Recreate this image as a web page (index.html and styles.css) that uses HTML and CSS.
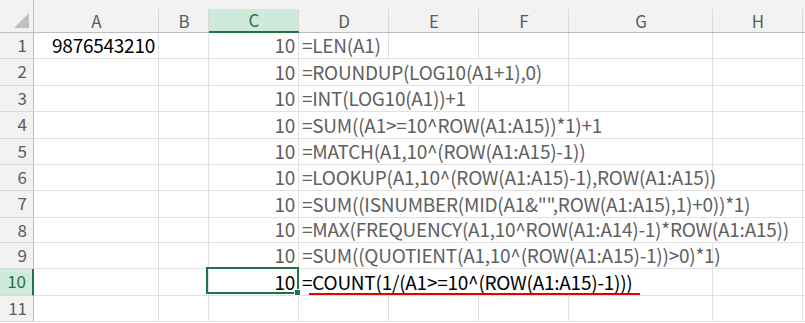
FILE: index.html
```html
<!doctype html>
<html>
  <head>
    <title>Hoja1</title>
    <link rel="stylesheet" href="styles.css">
  </head>
  <body>
    <div class="sheet" id="sheet">
      <div class="corner"><span class="corner-tri"></span></div>
      <div class="col-hdr">A</div>
      <div class="col-hdr">B</div>
      <div class="col-hdr activo">C</div>
      <div class="col-hdr">D</div>
      <div class="col-hdr">E</div>
      <div class="col-hdr">F</div>
      <div class="col-hdr">G</div>
      <div class="col-hdr">H</div>
      <div class="col-hdr"></div>
    </div>

    <script>
      const filas = [
        ["9876543210", "10", "=LEN(A1)", 1],
        ["", "10", "=ROUNDUP(LOG10(A1+1),0)", 3],
        ["", "10", "=INT(LOG10(A1))+1", 2],
        ["", "10", "=SUM((A1>=10^ROW(A1:A15))*1)+1", 4],
        ["", "10", "=MATCH(A1,10^(ROW(A1:A15)-1))", 4],
        ["", "10", "=LOOKUP(A1,10^(ROW(A1:A15)-1),ROW(A1:A15))", 4],
        ["", "10", "=SUM((ISNUMBER(MID(A1&\"\",ROW(A1:A15),1)+0))*1)", 5],
        ["", "10", "=MAX(FREQUENCY(A1,10^ROW(A1:A14)-1)*ROW(A1:A15))", 5],
        ["", "10", "=SUM((QUOTIENT(A1,10^(ROW(A1:A15)-1))>0)*1)", 4],
        ["", "10", "=COUNT(1/(A1>=10^(ROW(A1:A15)-1)))", 4],
        ["", "", "", 1]
      ];
      const sheet = document.getElementById("sheet");

      function celda(clase, texto) {
        const div = document.createElement("div");
        div.className = clase;
        div.textContent = texto;
        sheet.appendChild(div);
        return div;
      }

      filas.forEach(([a, c, formula, span], i) => {
        const activa = i === 9;
        celda("row-hdr" + (activa ? " activo" : ""), i + 1);
        celda("cell num negro", a);
        celda("cell", "");
        const cc = celda("cell num" + (activa ? " negro" : ""), c);
        if (activa) {
          const sel = document.createElement("div");
          sel.className = "seleccion";
          sel.innerHTML = '<span class="handle"></span>';
          cc.appendChild(sel);
        }
        const d = celda("cell formula" + (activa ? " negro" : ""), formula);
        d.style.gridColumn = "span " + span;
        if (activa) {
          const rojo = document.createElement("span");
          rojo.className = "subrayado";
          d.appendChild(rojo);
        }
        for (let k = span; k < 6; k++) celda("cell", "");
      });
    </script>
  </body>
</html>
```

FILE: styles.css
```css
body {
  margin: 0;
  background: #fff;
  overflow: hidden;
}
.sheet {
  display: grid;
  grid-template-columns: 34px 125px 50px 90px 90px 90px 90px 144px 90px 60px;
  grid-template-rows: 33px 26px 27px 26px 27px 26px 26px 27px 25px 26px 27px 26px;
  height: 323px;
  overflow: hidden;
  font-family: "Noto Sans CJK JP", "Noto Sans", sans-serif;
}
.corner {
  position: relative;
  background: #f2f2f2;
  border-right: 1px solid #bdbdbd;
  border-bottom: 1px solid #bdbdbd;
}
.corner-tri {
  position: absolute;
  right: 4px;
  bottom: 4px;
  width: 0;
  height: 0;
  border-left: 15px solid transparent;
  border-bottom: 15px solid #c0c0c0;
}
.col-hdr {
  background: #f2f2f2;
  border-bottom: 1px solid #bdbdbd;
  box-shadow: inset -1px 0 0 #d9d9d9;
  padding-top: 9px;
  display: flex;
  align-items: center;
  justify-content: center;
  font-size: 17px;
  color: #5c5c5c;
  position: relative;
}
.col-hdr::before {
  content: "";
  position: absolute;
  top: 0;
  right: 0;
  width: 1px;
  height: 9px;
  background: #f2f2f2;
}
.col-hdr.activo {
  background: linear-gradient(#f2f2f2 9px, #cfeada 9px);
  color: #217346;
  border-bottom: 2px solid #217346;
  padding-top: 8px;
}
.row-hdr {
  background: #f2f2f2;
  border-right: 1px solid #bdbdbd;
  border-bottom: 1px solid #d9d9d9;
  text-align: right;
  padding-right: 6px;
  font-size: 17px;
  line-height: 24px;
  color: #5c5c5c;
}
.row-hdr.activo {
  background: #cfeada;
  border-right: 2px solid #217346;
  color: #217346;
}
.cell {
  position: relative;
  border-right: 1px solid #e1e1e1;
  border-bottom: 1px solid #e1e1e1;
  font-size: 19px;
  letter-spacing: -0.25px;
  line-height: 24px;
  color: #606060;
  white-space: nowrap;
  display: flex;
  align-items: flex-end;
  padding-bottom: 1px;
}
.num {
  justify-content: flex-end;
  padding-right: 3px;
}
.formula {
  padding-left: 3px;
}
.negro { color: #000; }
.seleccion {
  position: absolute;
  left: -3px;
  top: -2px;
  width: 93px;
  height: 27px;
  box-sizing: border-box;
  border: 2px solid #217346;
}
.handle {
  position: absolute;
  right: -4px;
  bottom: -4px;
  width: 5px;
  height: 5px;
  background: #217346;
  border: 1px solid #fff;
}
.subrayado {
  position: absolute;
  left: 10px;
  bottom: 0;
  width: 331px;
  height: 2px;
  background: #e60000;
}
```
